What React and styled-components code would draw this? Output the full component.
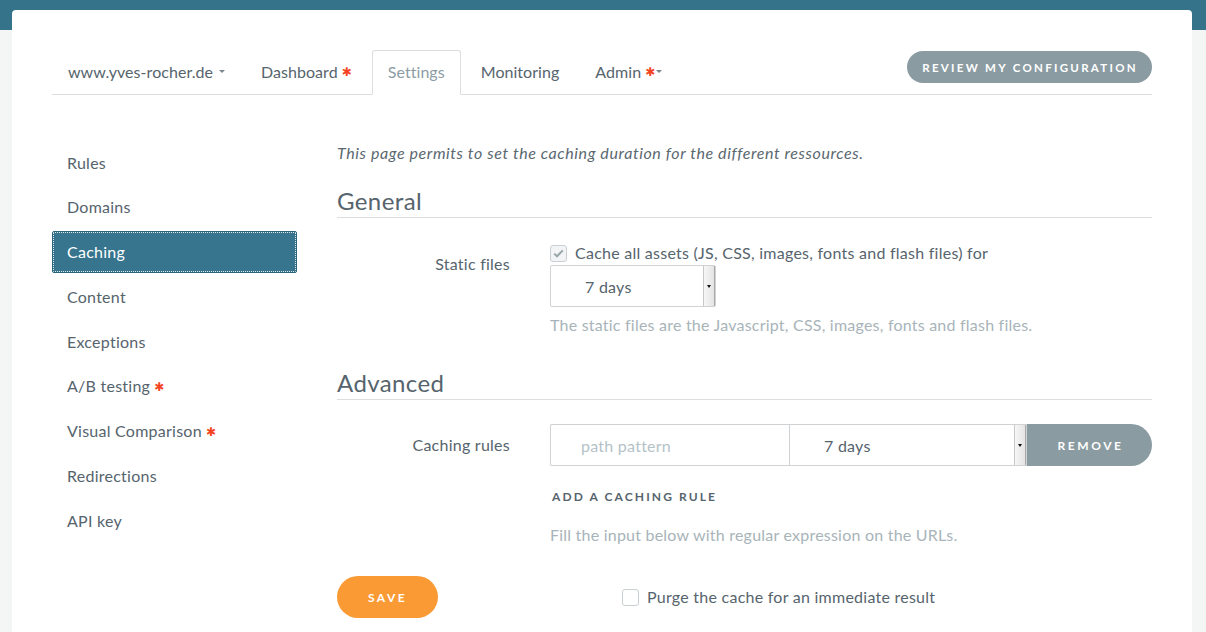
import React from "react";
import styled, { createGlobalStyle } from "styled-components";

const GlobalStyle = createGlobalStyle`
  html, body { margin: 0; padding: 0; }
  body {
    font-family: Lato, "Open Sans", sans-serif;
    color: #56646d;
    background: #f4f6f6;
    letter-spacing: 0.25px;
    -webkit-font-smoothing: antialiased;
  }
  * { box-sizing: border-box; }
`;

const Page = styled.div`
  min-height: 632px;
  padding: 10px 14px 0 12px;
  background: linear-gradient(#35738b 0, #35738b 30px, #f4f6f6 30px);
`;

const Card = styled.div`
  background: #fff;
  border-radius: 4px 4px 0 0;
  padding: 40px 40px 40px 40px;
  min-height: 622px;
`;

const NavBar = styled.div`
  display: flex;
  justify-content: space-between;
  border-bottom: 1px solid #dcdfe0;
  height: 45px;
`;

const Tabs = styled.div`
  display: flex;
  align-items: stretch;
  gap: 4px;
`;

const Tab = styled.div`
  display: flex;
  align-items: center;
  padding: 0 15px 3px;
  font-size: 16px;
  letter-spacing: 0.05px;
  color: ${(p) => (p.$active ? "#8d9ca3" : "#56646d")};
  border: 1px solid ${(p) => (p.$active ? "#dcdfe0" : "transparent")};
  border-bottom: ${(p) => (p.$active ? "1px solid #fff" : "none")};
  border-radius: 3px 3px 0 0;
  margin-bottom: ${(p) => (p.$active ? "-1px" : "0")};
  background: #fff;
`;

const Caret = styled.span`
  display: inline-block;
  width: 0;
  height: 0;
  margin-left: ${(p) => (p.$tight ? 1 : 6)}px;
  border-top: 3px solid #7a868d;
  border-left: 3px solid transparent;
  border-right: 3px solid transparent;
`;

const Star = styled.span`
  color: #f4441f;
  font-family: "DejaVu Sans", sans-serif;
  font-size: 12px;
  margin-left: 4px;
  position: relative;
  top: 1px;
`;

const PillButton = styled.button`
  border: none;
  background: #8a9ba1;
  color: #fff;
  font-family: Lato, sans-serif;
  font-weight: 700;
  font-size: 11.5px;
  letter-spacing: 2.3px;
  text-transform: uppercase;
  height: 32px;
  padding: 0 14px 0 15px;
  border-radius: 16px;
  margin-top: 1px;
  align-self: flex-start;
`;

const Body = styled.div`
  display: flex;
  gap: 40px;
  margin-top: 46px;
`;

const Sidebar = styled.div`
  width: 245px;
  flex: none;
  display: flex;
  flex-direction: column;
  gap: 2.75px;
`;

const SideItem = styled.div`
  height: 42px;
  display: flex;
  align-items: center;
  padding-left: 14px;
  font-size: 16px;
  color: ${(p) => (p.$active ? "#fff" : "#56646d")};
  background: ${(p) => (p.$active ? "#36758d" : "transparent")};
  border: 1px solid ${(p) => (p.$active ? "#2b6378" : "transparent")};
  outline: ${(p) => (p.$active ? "1px dotted rgba(255,255,255,0.85)" : "none")};
  outline-offset: -2px;
  border-radius: 2px;
`;

const Content = styled.div`
  flex: 1;
  display: flex;
  flex-direction: column;
`;

const Intro = styled.p`
  margin: 0;
  font-style: italic;
  font-size: 16px;
  letter-spacing: 0.6px;
  line-height: 24px;
  color: #5a6870;
`;

const SectionTitle = styled.h2`
  margin: ${(p) => p.$mt || 21}px 0 0;
  font-weight: 400;
  font-size: 24px;
  letter-spacing: 0.4px;
  line-height: 30px;
  color: #56646d;
  border-bottom: 1px solid #dcdfe0;
  padding-bottom: 1px;
`;

const FormRow = styled.div`
  display: flex;
  gap: 40px;
  margin-top: ${(p) => p.$mt}px;
`;

const Label = styled.div`
  width: 173px;
  flex: none;
  text-align: right;
  font-size: 16px;
  line-height: 24px;
  padding-top: ${(p) => p.$pt}px;
`;

const Controls = styled.div`
  flex: 1;
  display: flex;
  flex-direction: column;
`;

const CheckLine = styled.label`
  display: flex;
  align-items: center;
  gap: 8px;
  font-size: 16px;
  line-height: 24px;
`;

const Box = styled.span`
  width: 17px;
  height: 17px;
  border: 1px solid #c9cfd2;
  border-radius: 3px;
  background: ${(p) => (p.$checked ? "#f2f4f5" : "#fff")};
  display: flex;
  align-items: center;
  justify-content: center;
  flex: none;
`;

const Select = styled.div`
  width: ${(p) => p.$w}px;
  height: 42px;
  border: 1px solid #cfd3d5;
  border-radius: ${(p) => (p.$joined ? "0" : "2px")};
  display: flex;
  align-items: stretch;
  background: #fff;
  font-size: 16px;
  flex: none;
`;

const SelectText = styled.div`
  flex: 1;
  display: flex;
  align-items: center;
  padding-left: 34px;
  color: #56646d;
`;

const SelectArrow = styled.div`
  width: 12px;
  background: linear-gradient(to right, #f6f6f6, #e4e4e4);
  border-left: 1px solid #c9c9c9;
  border-right: 1px solid #a9a9a9;
  display: flex;
  align-items: center;
  justify-content: center;
  &::after {
    content: "";
    border-top: 3px solid #111;
    border-left: 2.5px solid transparent;
    border-right: 2.5px solid transparent;
  }
`;

const Help = styled.div`
  font-size: 16px;
  letter-spacing: 0.22px;
  line-height: 24px;
  color: #a8b4b9;
  margin-top: ${(p) => p.$mt}px;
`;

const RuleGroup = styled.div`
  display: flex;
  height: 42px;
`;

const TextInput = styled.div`
  width: 239px;
  flex: none;
  border: 1px solid #cfd3d5;
  border-right: none;
  border-radius: 2px 0 0 2px;
  display: flex;
  align-items: center;
  padding-left: 30px;
  font-size: 16px;
  color: #b4c2c8;
`;

const RemoveButton = styled.button`
  flex: 1;
  border: none;
  background: #8a9ba1;
  color: #fff;
  font-family: Lato, sans-serif;
  font-weight: 700;
  font-size: 12px;
  letter-spacing: 2.6px;
  border-radius: 0 21px 21px 0;
  padding: 0 0 0 2px;
`;

const LinkAction = styled.div`
  margin-top: 19px;
  margin-left: 2px;
  font-size: 12px;
  font-weight: 700;
  letter-spacing: 2.1px;
  line-height: 24px;
  color: #56646d;
`;

const SaveRow = styled.div`
  display: flex;
  align-items: center;
  gap: 184px;
  margin-top: 29px;
`;

const SaveButton = styled.button`
  width: 101px;
  height: 42px;
  border: none;
  border-radius: 21px;
  background: #f99a35;
  color: #fff;
  font-family: Lato, sans-serif;
  font-weight: 700;
  font-size: 12px;
  letter-spacing: 2.4px;
`;

const Check = () => (
  <svg width="11" height="9" viewBox="0 0 11 9">
    <path d="M1.2 4.6 L4 7.3 L9.8 1.4" fill="none" stroke="#9aa6ab" strokeWidth="2" />
  </svg>
);

const sideItems = [
  ["Rules"],
  ["Domains"],
  ["Caching", false, true],
  ["Content"],
  ["Exceptions"],
  ["A/B testing", true],
  ["Visual Comparison", true],
  ["Redirections"],
  ["API key"],
];

export default function App() {
  return (
    <>
      <GlobalStyle />
      <Page>
        <Card>
          <NavBar>
            <Tabs>
              <Tab>
                www.yves-rocher.de<Caret />
              </Tab>
              <Tab>
                Dashboard<Star>✱</Star>
              </Tab>
              <Tab $active>Settings</Tab>
              <Tab>Monitoring</Tab>
              <Tab>
                Admin<Star>✱</Star>
                <Caret $tight />
              </Tab>
            </Tabs>
            <PillButton>Review my configuration</PillButton>
          </NavBar>
          <Body>
            <Sidebar>
              {sideItems.map(([name, star, active]) => (
                <SideItem key={name} $active={active}>
                  {name}
                  {star && <Star>✱</Star>}
                </SideItem>
              ))}
            </Sidebar>
            <Content>
              <Intro>This page permits to set the caching duration for the different ressources.</Intro>
              <SectionTitle>General</SectionTitle>
              <FormRow $mt={23}>
                <Label $pt={11}>Static files</Label>
                <Controls>
                  <CheckLine>
                    <Box $checked>
                      <Check />
                    </Box>
                    Cache all assets (JS, CSS, images, fonts and flash files) for
                  </CheckLine>
                  <Select $w={166}>
                    <SelectText>7 days</SelectText>
                    <SelectArrow />
                  </Select>
                  <Help $mt={6}>The static files are the Javascript, CSS, images, fonts and flash files.</Help>
                </Controls>
              </FormRow>
              <SectionTitle $mt={31}>Advanced</SectionTitle>
              <FormRow $mt={24}>
                <Label $pt={9}>Caching rules</Label>
                <Controls>
                  <RuleGroup>
                    <TextInput>path pattern</TextInput>
                    <Select $w={238} $joined>
                      <SelectText>7 days</SelectText>
                      <SelectArrow />
                    </Select>
                    <RemoveButton>REMOVE</RemoveButton>
                  </RuleGroup>
                  <LinkAction>ADD A CACHING RULE</LinkAction>
                  <Help $mt={14}>Fill the input below with regular expression on the URLs.</Help>
                </Controls>
              </FormRow>
              <SaveRow>
                <SaveButton>SAVE</SaveButton>
                <CheckLine>
                  <Box />
                  Purge the cache for an immediate result
                </CheckLine>
              </SaveRow>
            </Content>
          </Body>
        </Card>
      </Page>
    </>
  );
}
